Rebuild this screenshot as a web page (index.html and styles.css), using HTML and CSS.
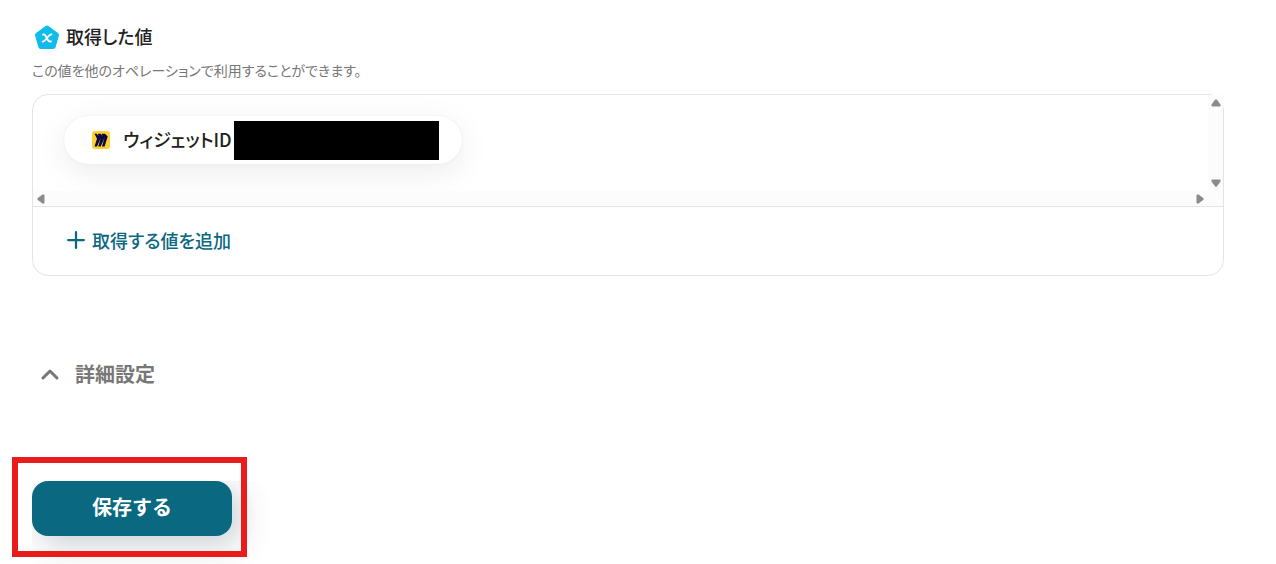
FILE: index.html
```html
<!DOCTYPE html>
<html lang="ja">
<head>
<meta charset="utf-8">
<meta name="viewport" content="width=device-width, initial-scale=1">
<title>取得した値</title>
<link rel="stylesheet" href="styles.css">
</head>
<body>
<main class="page">
  <section class="outputs">
    <header class="outputs-header">
      <svg class="outputs-icon" viewBox="0 0 26 26" aria-hidden="true">
        <path d="M13 4 22.500 11 19.200 22.500H6.800L3.500 11Z" fill="#10bcec" stroke="#10bcec" stroke-width="5" stroke-linejoin="round"/>
        <path d="M9 10.600C12.600 8.700 12.400 19.200 17 17.400M17.400 10.400C14.400 10.600 11.600 17.600 8.600 17.600" fill="none" stroke="#fff" stroke-width="1.900" stroke-linecap="round"/>
      </svg>
      <h2 class="outputs-title">取得した値</h2>
    </header>
    <p class="outputs-note">この値を他のオペレーションで利用することができます。</p>
    <div class="card">
      <div class="scroller">
        <div class="scroll-content">
          <div class="pill">
            <svg class="pill-icon" viewBox="0 0 18 18" aria-hidden="true">
              <rect width="18" height="18" rx="3" fill="#ffd02f"/>
              <path d="M2.500 2.800H5L6.300 5.200 6 2.800H9L10.200 5 9.900 2.800H13L15.700 5.600 12.600 15.500H9.900L12.500 6.800 8.700 15.500H6.200L8.700 7.200 5 15.500H2.500L5 7.800Z" fill="#0b0742"/>
            </svg>
            <span class="pill-label">ウィジェットID</span>
            <span class="redaction"></span>
          </div>
        </div>
        <div class="track track-vertical" aria-hidden="true">
          <svg class="arrow" viewBox="0 0 10 8"><path d="M4 .8Q5-.2 6 .8L9.500 5.500Q10 7.500 8.500 7.500H1.500Q0 7.500 .5 5.500Z"/></svg>
          <svg class="arrow" viewBox="0 0 10 8"><path d="M4 7.200Q5 8.200 6 7.200L9.500 2.500Q10 .5 8.500 .5H1.500Q0 .5 .5 2.500Z"/></svg>
        </div>
        <div class="track track-horizontal" aria-hidden="true">
          <svg class="arrow-side" viewBox="0 0 8 10"><path d="M.8 4Q-.2 5 .8 6L5.500 9.500Q7.500 10 7.500 8.500V1.500Q7.500 0 5.500 .5Z"/></svg>
          <svg class="arrow-side" viewBox="0 0 8 10"><path d="M7.200 4Q8.200 5 7.200 6L2.500 9.500Q.5 10 .5 8.500V1.500Q.5 0 2.500 .5Z"/></svg>
        </div>
      </div>
      <div class="card-footer">
        <button class="add-button" type="button">
          <svg class="add-icon" viewBox="0 0 16 16" aria-hidden="true"><path d="M8 1V15M1 8H15" fill="none" stroke="currentColor" stroke-width="2" stroke-linecap="round"/></svg>
          取得する値を追加
        </button>
      </div>
    </div>
  </section>
  <button class="details-toggle" type="button">
    <svg class="chevron" viewBox="0 0 18 12" aria-hidden="true"><path d="M2 10 9 3l7 7" fill="none" stroke="currentColor" stroke-width="3" stroke-linecap="round" stroke-linejoin="round"/></svg>
    詳細設定
  </button>
  <div class="actions">
    <button class="save-button" type="button">保存する</button>
    <div class="highlight"></div>
  </div>
</main>
</body>
</html>
```

FILE: styles.css
```css
* {
  box-sizing: border-box;
}

body {
  margin: 0;
  background: #fff;
  color: #222;
  font-family: "Noto Sans CJK JP", sans-serif;
  font-feature-settings: "palt";
}

button {
  border: 0;
  background: none;
  font-family: inherit;
  font-feature-settings: inherit;
  cursor: pointer;
}

.page {
  display: flex;
  flex-direction: column;
  align-items: flex-start;
  padding: 24px 52px 28px 32px;
}

.outputs {
  width: 100%;
}

.outputs-header {
  display: flex;
  align-items: flex-start;
  gap: 6px;
  padding-left: 2px;
}

.outputs-icon {
  width: 26px;
  height: 26px;
}

.outputs-title {
  margin: 0;
  font-size: 18px;
  font-weight: 500;
  line-height: 24px;
}

.outputs-note {
  margin: 10px 0 13px;
  color: #777;
  font-size: 14px;
  line-height: 21px;
}

.card {
  border: 1px solid #e4e4e4;
  border-radius: 16px;
}

.scroller {
  display: grid;
  grid-template-columns: 1fr 15px;
  overflow: hidden;
  border-bottom: 1px solid #e4e4e4;
  border-radius: 15px 0 0;
}

.scroll-content {
  overflow: hidden;
  padding: 21px 31px 27px;
}

.pill {
  display: inline-flex;
  align-items: center;
  height: 48px;
  padding: 0 23px 0 28px;
  border-radius: 24px;
  background: #fff;
  box-shadow: 0 0 2px rgba(0, 0, 0, 0.08), 0 8px 32px rgba(0, 0, 0, 0.08);
  font-size: 18px;
  font-weight: 500;
  vertical-align: top;
  white-space: nowrap;
}

.pill-icon {
  width: 18px;
  height: 18px;
  margin-right: 13px;
}

.pill-label {
  padding: 0 2px 2px 0;
}

.redaction {
  width: 205px;
  height: 39px;
  background: #000;
}

.track {
  display: flex;
  justify-content: space-between;
  align-items: center;
  background: #fcfcfc;
}

.track-vertical {
  flex-direction: column;
  padding: 4px 0;
}

.track-horizontal {
  grid-column: 1 / -1;
  height: 15px;
  padding: 0 19px 0 4px;
}

.arrow {
  width: 10px;
  height: 8px;
  fill: #8b8b8b;
}

.arrow-side {
  width: 8px;
  height: 10px;
  fill: #8b8b8b;
}

.card-footer {
  padding: 19px 34px 21px;
}

.add-button {
  display: flex;
  align-items: center;
  gap: 7px;
  padding: 0;
  color: #0b6881;
  font-size: 18px;
  font-weight: 500;
  line-height: 28px;
}

.add-icon {
  width: 18px;
  height: 18px;
}

.details-toggle {
  display: flex;
  align-items: center;
  gap: 16px;
  margin-top: 83px;
  padding: 0 9px;
  color: #777;
  font-size: 20px;
  font-weight: 700;
  line-height: 30px;
}

.chevron {
  width: 18px;
  height: 12px;
}

.actions {
  position: relative;
  margin-top: 92px;
}

.save-button {
  display: block;
  min-width: 200px;
  padding: 11px 24px 14px;
  border-radius: 16px;
  background: #0b6881;
  box-shadow: 8px 8px 32px rgba(20, 50, 65, 0.24);
  clip-path: inset(0 -48px -48px 0);
  color: #fff;
  font-size: 20px;
  font-feature-settings: normal;
  font-weight: 700;
  line-height: 30px;
}

.highlight {
  position: absolute;
  inset: -24px -15px -21px -20px;
  border: 6px solid #e91b1b;
  pointer-events: none;
}
```
